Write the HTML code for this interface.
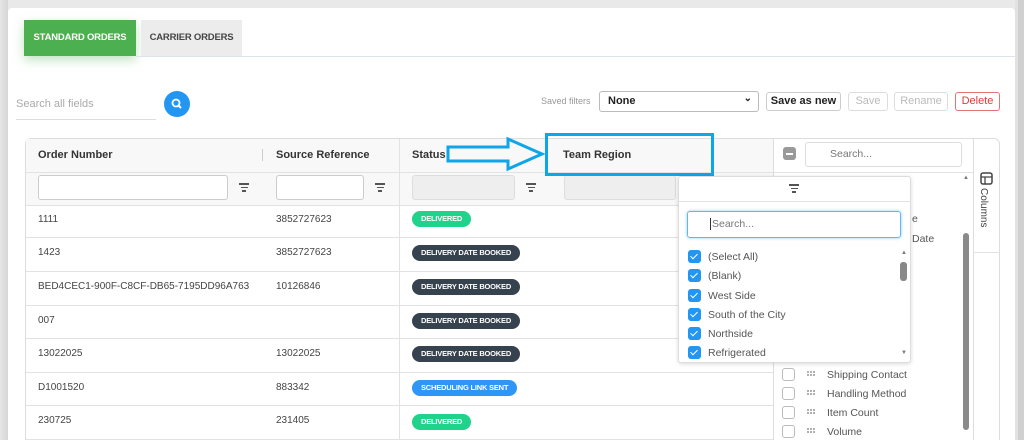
<!DOCTYPE html><html style="overflow:hidden;height:440px"><head><style>
*{box-sizing:border-box;margin:0;padding:0}
body{width:1024px;height:440px;overflow:hidden;background:#e9e9e9;font-family:"Liberation Sans",sans-serif;position:relative}
.a{position:absolute}
.card{left:8px;top:8px;width:1007px;height:432px;background:#fff;border-radius:4px 4px 0 0}
.t{font-size:10px;color:#444}
.hd{font-size:11px;font-weight:bold;color:#333}
.pill{position:absolute;height:16px;border-radius:8px;font-size:7.5px;font-weight:bold;color:#fff;line-height:16px;padding:0 9px;letter-spacing:-.2px}
.g{background:#1fd38a}.d{background:#37424f}.b{background:#2d96f7}
.hl{position:absolute;height:1px;background:#e2e2e2}
.fi{position:absolute;border:1px solid #ccc;border-radius:3px;background:#fff;height:25px}
.fg{position:absolute;width:10px}
.fg i{display:block;height:1.5px;background:#555;margin:0 auto 2px}
.cb{position:absolute;width:13px;height:13px;border-radius:3px;background:#2196f3}
.cb:after{content:"";position:absolute;left:4px;top:2px;width:3px;height:6px;border:solid #fff;border-width:0 1.5px 1.5px 0;transform:rotate(45deg)}
.it{position:absolute;font-size:10.5px;color:#555}
.ec{position:absolute;width:13px;height:13px;border:1px solid #bbb;border-radius:3px;background:#fff}
.btn{position:absolute;top:92px;height:19px;border:1px solid #ccc;border-radius:3px;font-size:11px;line-height:17px;text-align:center;background:#fff}
</style></head><body>
<div class="a card"></div>
<div class="a" style="left:0;top:0;width:8px;height:440px;background:linear-gradient(90deg,#e6e6e6,#d6d6d6)"></div>
<div class="a" style="left:1015px;top:0;width:9px;height:440px;background:#e2e2e2"></div>
<div class="a" style="left:1018px;top:0;width:6px;height:440px;background:#d0d0d0"></div>
<div class="a" style="left:24px;top:20px;width:112px;height:36px;background:#4caf50;box-shadow:0 4px 10px rgba(76,175,80,.35);color:#fff;font-size:9.5px;font-weight:bold;line-height:36px;text-align:center;letter-spacing:-.2px">STANDARD ORDERS</div>
<div class="a" style="left:141px;top:20px;width:101px;height:36px;background:#ececec;color:#444;font-size:9.5px;font-weight:bold;line-height:36px;text-align:center;letter-spacing:-.2px">CARRIER ORDERS</div>
<div class="hl" style="left:136px;top:56px;width:879px;background:#dde3ea"></div>
<div class="a" style="left:16px;top:98px;font-size:11px;color:#aaa">Search all fields</div>
<div class="hl" style="left:16px;top:119px;width:140px;background:#ddd"></div>
<div class="a" style="left:164px;top:91px;width:26px;height:26px;border-radius:50%;background:#2196f3"><svg width="26" height="26"><circle cx="12" cy="12" r="3.5" stroke="#fff" stroke-width="1.8" fill="none"/><path d="M14.5 14.5L17 17" stroke="#fff" stroke-width="2"/></svg></div>
<div class="a" style="left:541px;top:96px;font-size:9px;color:#999">Saved filters</div>
<div class="a" style="left:599px;top:91px;width:160px;height:21px;border:1px solid #bbb;border-radius:3px;font-size:11px;font-weight:bold;color:#222;padding:3px 8px">None<span style="position:absolute;right:6px;top:1px;font-size:10px">&#8964;</span></div>
<div class="btn" style="left:766px;width:75px;font-weight:bold;color:#222">Save as new</div>
<div class="btn" style="left:848px;width:40px;color:#bbb;border-color:#ddd">Save</div>
<div class="btn" style="left:894px;width:54px;color:#bbb;border-color:#ddd">Rename</div>
<div class="btn" style="left:955px;width:45px;color:#e53935;border-color:#e57373">Delete</div>
<div class="a" style="left:25px;top:138px;width:975px;height:310px;border:1px solid #ddd;border-radius:6px"></div>
<div class="a" style="left:26px;top:139px;width:747px;height:66px;background:#f8f8f8"></div>
<div class="hl" style="left:26px;top:172px;width:747px"></div>
<div class="hl" style="left:26px;top:205px;width:747px"></div>
<div class="a" style="left:399px;top:139px;width:1px;height:301px;background:#e2e2e2"></div>
<div class="a" style="left:773px;top:139px;width:1px;height:301px;background:#ddd"></div>
<div class="a" style="left:262px;top:149px;width:1px;height:12px;background:#ccc"></div>
<div class="a hd" style="left:38px;top:149px">Order Number</div>
<div class="a hd" style="left:276px;top:149px">Source Reference</div>
<div class="a hd" style="left:412px;top:149px">Status</div>
<div class="fi" style="left:38px;top:175px;width:190px"></div>
<div class="fg" style="left:239px;top:183px"><i style="width:10px"></i><i style="width:7px"></i><i style="width:4px"></i></div>
<div class="fi" style="left:276px;top:175px;width:88px"></div>
<div class="fg" style="left:375px;top:183px"><i style="width:10px"></i><i style="width:7px"></i><i style="width:4px"></i></div>
<div class="fi" style="left:412px;top:175px;width:103px;background:#eee;border-color:#ddd"></div>
<div class="fg" style="left:526px;top:183px"><i style="width:10px"></i><i style="width:7px"></i><i style="width:4px"></i></div>
<div class="fi" style="left:564px;top:175px;width:112px;background:#eee;border-color:#ddd"></div>
<div class="hl" style="left:26px;top:237px;width:652px"></div>
<div class="hl" style="left:26px;top:271px;width:652px"></div>
<div class="hl" style="left:26px;top:305px;width:652px"></div>
<div class="hl" style="left:26px;top:338px;width:652px"></div>
<div class="hl" style="left:26px;top:372px;width:747px"></div>
<div class="hl" style="left:26px;top:405px;width:747px"></div>
<div class="hl" style="left:26px;top:439px;width:747px"></div>
<div class="a t" style="left:38px;top:214px">1111</div><div class="a t" style="left:276px;top:214px">3852727623</div><div class="pill g" style="left:412px;top:211px">DELIVERED</div>
<div class="a t" style="left:38px;top:247px">1423</div><div class="a t" style="left:276px;top:247px">3852727623</div><div class="pill d" style="left:412px;top:245px">DELIVERY DATE BOOKED</div>
<div class="a t" style="left:38px;top:281px">BED4CEC1-900F-C8CF-DB65-7195DD96A763</div><div class="a t" style="left:276px;top:281px">10126846</div><div class="pill d" style="left:412px;top:279px">DELIVERY DATE BOOKED</div>
<div class="a t" style="left:38px;top:315px">007</div><div class="pill d" style="left:412px;top:313px">DELIVERY DATE BOOKED</div>
<div class="a t" style="left:38px;top:348px">13022025</div><div class="a t" style="left:276px;top:348px">13022025</div><div class="pill d" style="left:412px;top:346px">DELIVERY DATE BOOKED</div>
<div class="a t" style="left:38px;top:382px">D1001520</div><div class="a t" style="left:276px;top:382px">883342</div><div class="pill b" style="left:412px;top:380px">SCHEDULING LINK SENT</div>
<div class="a t" style="left:38px;top:415px">230725</div><div class="a t" style="left:276px;top:415px">231405</div><div class="pill g" style="left:412px;top:414px">DELIVERED</div>
<div class="a" style="left:545px;top:133px;width:169px;height:43px;border:3px solid #0ea5e9"></div>
<div class="a hd" style="left:563px;top:149px">Team Region</div>
<svg class="a" style="left:444px;top:136px" width="104" height="36"><path d="M4 11H64V3L98 18L64 33V25H4Z" fill="none" stroke="#0ea5e9" stroke-width="3"/></svg>
<div class="a" style="left:774px;top:139px;width:199px;height:301px;background:#fff"></div>
<div class="hl" style="left:774px;top:172px;width:199px"></div>
<div class="a" style="left:783px;top:147px;width:13px;height:13px;border-radius:3px;background:#999"><div style="margin:6px 3px 0;height:1.5px;background:#fff"></div></div>
<div class="a" style="left:805px;top:142px;width:157px;height:25px;border:1px solid #ddd;border-radius:3px;font-size:10.5px;color:#777;padding:5px 0 0 24px">Search...</div>
<div class="a" style="left:973px;top:139px;width:1px;height:301px;background:#ddd"></div>
<div class="hl" style="left:974px;top:252px;width:26px"></div>
<svg class="a" style="left:980px;top:172px" width="13" height="13"><rect x="1" y="1" width="11" height="11" rx="2" fill="none" stroke="#444" stroke-width="1.5"/><path d="M1 5H12M5 5V12" stroke="#444" stroke-width="1.3"/></svg>
<div class="a" style="left:978px;top:188px;font-size:10px;color:#444;writing-mode:vertical-rl">Columns</div>
<div class="a" style="left:963px;top:175px;font-size:6px;color:#777">&#9650;</div>
<div class="a" style="left:963px;top:233px;width:6px;height:197px;border-radius:3px;background:#8a8a8a"></div>
<div class="a" style="left:912px;top:213px;font-size:10.5px;color:#555">e</div>
<div class="a" style="left:912px;top:233px;font-size:10.5px;color:#555">Date</div>
<svg width="0" height="0" style="position:absolute"><defs><g id="dd"><circle cx="1" cy="1" r=".9"/><circle cx="4" cy="1" r=".9"/><circle cx="7" cy="1" r=".9"/><circle cx="1" cy="4" r=".9"/><circle cx="4" cy="4" r=".9"/><circle cx="7" cy="4" r=".9"/></g></defs></svg>
<div class="ec" style="left:782px;top:368px"></div><svg class="a" style="left:807px;top:371px" width="8" height="5" fill="#777"><use href="#dd"/></svg><div class="it" style="left:827px;top:369px">Shipping Contact</div>
<div class="ec" style="left:782px;top:387px"></div><svg class="a" style="left:807px;top:390px" width="8" height="5" fill="#777"><use href="#dd"/></svg><div class="it" style="left:827px;top:388px">Handling Method</div>
<div class="ec" style="left:782px;top:406px"></div><svg class="a" style="left:807px;top:409px" width="8" height="5" fill="#777"><use href="#dd"/></svg><div class="it" style="left:827px;top:407px">Item Count</div>
<div class="ec" style="left:782px;top:425px"></div><svg class="a" style="left:807px;top:428px" width="8" height="5" fill="#777"><use href="#dd"/></svg><div class="it" style="left:827px;top:426px">Volume</div>
<div class="a" style="left:678px;top:176px;width:233px;height:187px;background:#fff;border:1px solid #ddd;border-radius:3px;box-shadow:0 1px 4px rgba(0,0,0,.15)"></div>
<div class="hl" style="left:679px;top:201px;width:231px"></div>
<div class="fg" style="left:789px;top:184px"><i style="width:10px"></i><i style="width:7px"></i><i style="width:4px"></i></div>
<div class="a" style="left:687px;top:211px;width:214px;height:27px;border:1.5px solid #64b5f6;border-radius:3px;box-shadow:0 0 3px #90caf9;font-size:10.5px;color:#777;padding:6px 0 0 22px"><span style="border-left:1px solid #333;padding-left:1px">Search...</span></div>
<div class="a" style="left:901px;top:250px;font-size:6px;color:#777">&#9650;</div>
<div class="a" style="left:900px;top:262px;width:7px;height:19px;border-radius:3px;background:#888"></div>
<div class="a" style="left:901px;top:350px;font-size:6px;color:#777">&#9660;</div>
<div class="cb" style="left:688px;top:250px"></div><div class="it" style="left:708px;top:251px">(Select All)</div>
<div class="cb" style="left:688px;top:269px"></div><div class="it" style="left:708px;top:270px">(Blank)</div>
<div class="cb" style="left:688px;top:289px"></div><div class="it" style="left:708px;top:290px">West Side</div>
<div class="cb" style="left:688px;top:308px"></div><div class="it" style="left:708px;top:309px">South of the City</div>
<div class="cb" style="left:688px;top:327px"></div><div class="it" style="left:708px;top:328px">Northside</div>
<div class="cb" style="left:688px;top:346px"></div><div class="it" style="left:708px;top:347px">Refrigerated</div>
</body></html>
